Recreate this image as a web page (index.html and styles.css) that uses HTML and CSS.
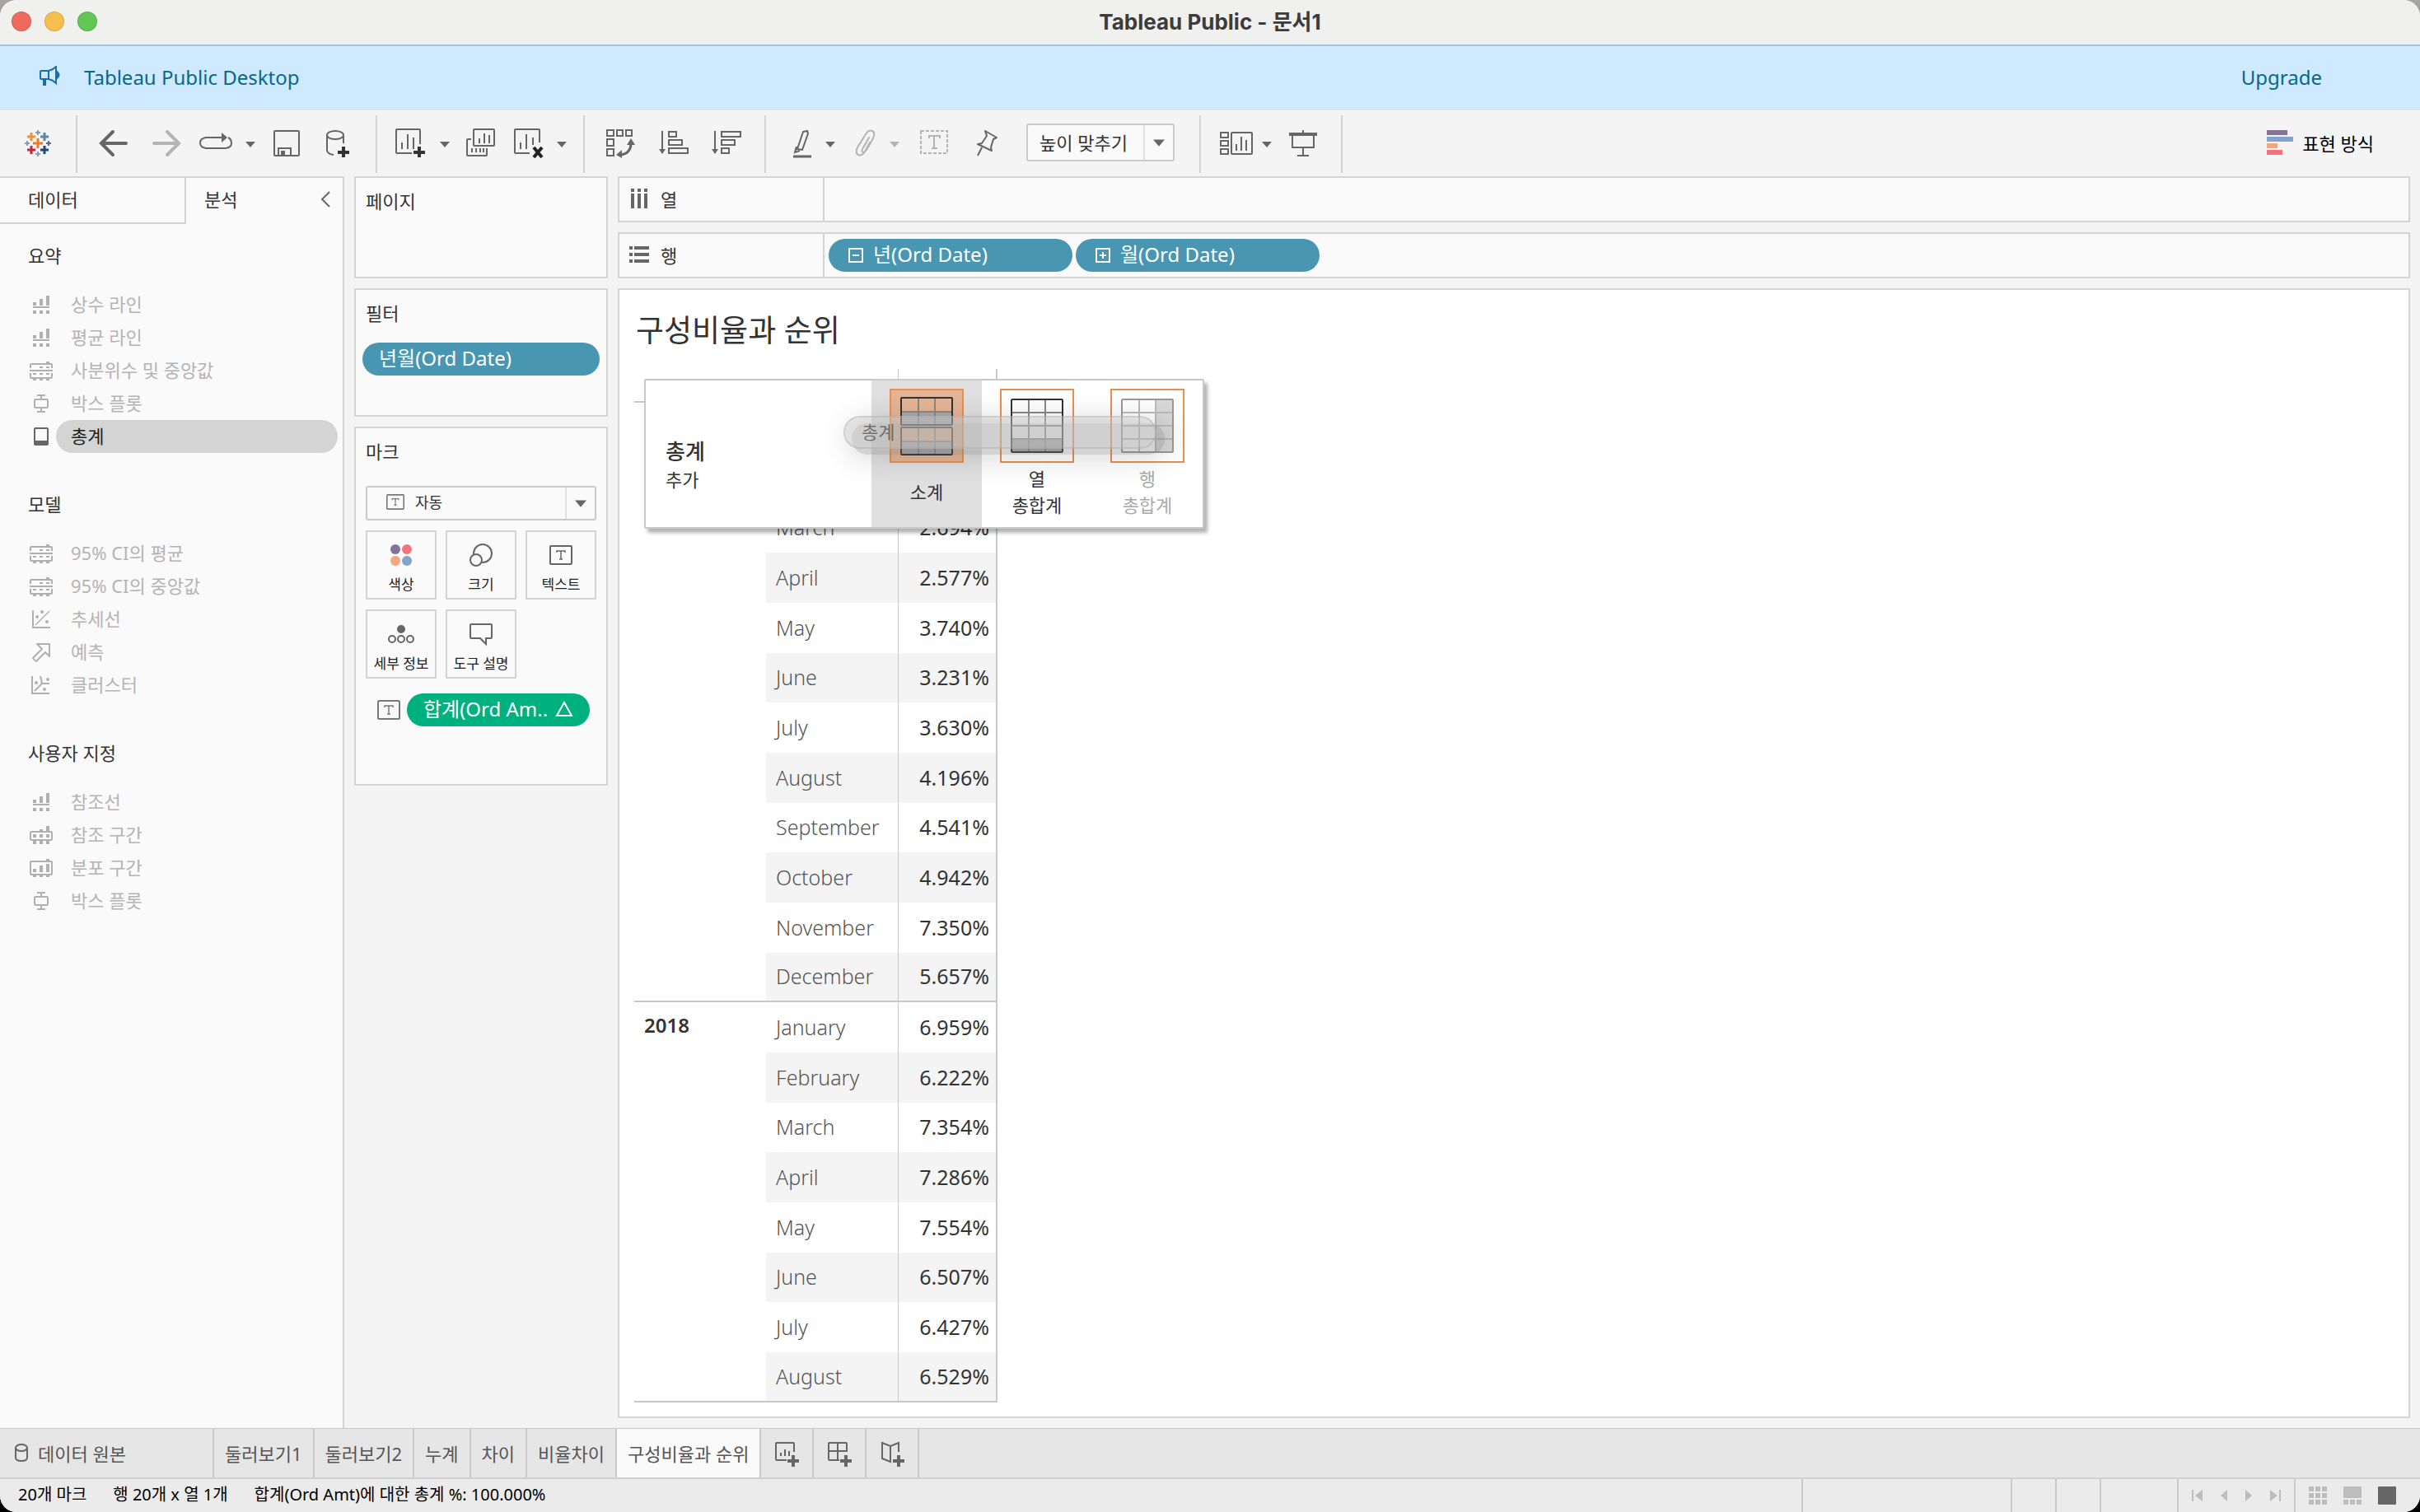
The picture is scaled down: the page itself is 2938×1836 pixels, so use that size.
FILE: index.html
```html
<!DOCTYPE html>
<html lang="ko">
<head>
  <meta charset="UTF-8">
  <meta name="viewport" content="width=device-width, initial-scale=1.0">
  <title>Tableau Public - 문서1</title>
  <link rel="stylesheet" href="styles.css">
</head>
<body>
  <!-- shared icons -->
  <svg class="sprite" aria-hidden="true">
    <symbol id="i-caret" viewBox="0 0 12 8"><path d="M0 1h12L6 8z" fill="currentColor"/></symbol>
    <symbol id="i-line" viewBox="0 0 30 30"><path d="M5 12h4v4H5zM13 8h4v8h-4zM21 4h4v12h-4zM5 17h20v2H5zM5 22h4v4H5zM13 22h4v4h-4zM21 22h4v4h-4z" fill="currentColor"/></symbol>
    <symbol id="i-quartile" viewBox="0 0 30 30"><path d="M2 12V8q0-1 1-1h24q1 0 1 1v4M1 15h28M2 18v5q0 1 1 1h24q1 0 1-1v-5" fill="none" stroke="currentColor" stroke-width="2"/><path d="M21 4h4v2h-4zM13 10h4v2h-4zM21 10h4v2h-4zM5 18h4v2H5zM13 18h4v2h-4zM21 18h4v2h-4zM5 25h4v2H5zM13 25h4v2h-4zM21 25h4v2h-4z" fill="currentColor"/></symbol>
    <symbol id="i-box" viewBox="0 0 30 30"><path d="M10 5h10M15 5v5M10 25h10M15 20v5" fill="none" stroke="currentColor" stroke-width="2"/><rect x="7" y="10" width="16" height="10" rx="1" fill="none" stroke="currentColor" stroke-width="2"/></symbol>
    <symbol id="i-totals" viewBox="0 0 30 30"><rect x="7" y="5" width="16" height="20" rx="1" fill="none" stroke="currentColor" stroke-width="2"/><path d="M7 20h16v5H7z" fill="currentColor"/></symbol>
    <symbol id="i-trend" viewBox="0 0 30 30"><path d="M5 4v21h21" fill="none" stroke="currentColor" stroke-width="2"/><path d="M8 22L25 5" stroke="currentColor" stroke-width="1.5"/><g fill="currentColor"><circle cx="10" cy="12" r="2"/><circle cx="16" cy="6" r="2"/><circle cx="22" cy="18" r="2"/></g></symbol>
    <symbol id="i-forecast" viewBox="0 0 30 30"><path d="M10 5h15v15l-5-5L9 26q-1 0-4-4l11-11z" fill="none" stroke="currentColor" stroke-width="2" stroke-linejoin="round"/></symbol>
    <symbol id="i-cluster" viewBox="0 0 30 30"><path d="M4 4v21h21M14 4l2 9h9M16 13l-9 9" fill="none" stroke="currentColor" stroke-width="2"/><g fill="currentColor"><circle cx="9" cy="12" r="2"/><circle cx="23" cy="8" r="2"/><circle cx="19" cy="20" r="2"/></g></symbol>
    <symbol id="i-band" viewBox="0 0 30 30"><rect x="2" y="11" width="26" height="10" rx="1" fill="none" stroke="currentColor" stroke-width="2"/><path d="M13 8h4v3h-4zM21 4h4v7h-4zM5 14h4v4H5zM13 14h4v4h-4zM21 14h4v4h-4zM5 22h4v4H5zM13 22h4v4h-4zM21 22h4v4h-4z" fill="currentColor"/></symbol>
    <symbol id="i-dist" viewBox="0 0 30 30"><rect x="2" y="7" width="26" height="16" rx="1" fill="none" stroke="currentColor" stroke-width="2"/><path d="M21 4h4v3h-4zM5 16h4v4H5zM13 12h4v8h-4zM21 10h4v10h-4zM5 24h4v2H5zM13 24h4v2h-4zM21 24h4v2h-4z" fill="currentColor"/></symbol>
    <symbol id="i-text" viewBox="0 0 28 24"><rect x="1" y="1" width="26" height="22" rx="1" fill="none" stroke="currentColor" stroke-width="2"/><path d="M9 9V7h10v2M14 7v10M12 17h4" fill="none" stroke="currentColor" stroke-width="1.5"/></symbol>
  </svg>

  <div class="app">
    <header class="titlebar">
      <div class="lights">
        <span class="light red"></span>
        <span class="light yellow"></span>
        <span class="light green"></span>
      </div>
      <h1>Tableau Public - 문서1</h1>
    </header>

    <div class="banner">
      <svg class="megaphone" width="26" height="26" viewBox="0 0 26 26" fill="none" stroke="#1b6fa8" stroke-width="2"><path d="M2 7q0-1 1-1h9q5-1 9-5v20q-4-4-9-5H3q-1 0-1-1zM12 6v10"/><path d="M7 16v8" stroke-width="4"/><path d="M23 8q3 3 0 6z" fill="#1b6fa8"/></svg>
      <a href="#">Tableau Public Desktop</a>
      <a class="upgrade" href="#">Upgrade</a>
    </div>

    <div class="toolbar">
      <div class="group group-logo">
        <button aria-label="시작 페이지">
          <svg width="40" height="40" viewBox="0 0 40 40" fill="none" stroke-width="3"><path d="M20 13v12M14 19h12" stroke="#eb7a31"/><path d="M12 6v10M7 11h10" stroke="#ed9430"/><path d="M28 6v10M23 11h10" stroke="#5889a8"/><path d="M12 22v10M7 27h10" stroke="#c8233e"/><path d="M28 22v10M23 27h10" stroke="#1f447e"/><g stroke-width="2"><path d="M20 3v6M17 6h6M7 16v6M4 19h6" stroke="#7ba3b4"/><path d="M33 16v6M30 19h6" stroke="#5c6692"/><path d="M20 29v6M17 32h6" stroke="#929ab8"/></g></svg>
        </button>
      </div>
      <div class="group group-nav">
        <button aria-label="실행 취소"><svg width="40" height="40" viewBox="0 0 40 40" fill="none" stroke="#666" stroke-width="4" stroke-linecap="round"><path d="M35 19H5M19 5L5 19l14 14"/></svg></button>
        <button aria-label="다시 실행" disabled><svg width="40" height="40" viewBox="0 0 40 40" fill="none" stroke="#b4b4b4" stroke-width="4" stroke-linecap="round"><path d="M7 19h30M23 5l14 14-14 14"/></svg></button>
        <div class="split">
          <button aria-label="바꾸기"><svg width="40" height="40" viewBox="0 0 40 40" fill="none" stroke="#666" stroke-width="2"><path d="M29 12H8q-7 1-7 6.500t7 6.500h24q7-1 7-6 0-5-4-7"/><path d="M27 6l7 6-7 6z" fill="#666" stroke="none"/></svg></button>
          <button aria-label="메뉴" class="caret"><svg width="12" height="8"><use href="#i-caret"/></svg></button>
        </div>
        <button aria-label="저장"><svg width="32" height="40" viewBox="0 0 32 40" fill="none" stroke="#666" stroke-width="2"><rect x="1" y="4" width="30" height="30" rx="1"/><path d="M6 34v-9h15v9"/><path d="M9 28h5v6H9z" fill="#666" stroke="none"/></svg></button>
        <button aria-label="새 데이터 원본"><svg width="40" height="40" viewBox="0 0 40 40" fill="none" stroke="#666" stroke-width="2"><ellipse cx="21" cy="9" rx="10" ry="5"/><path d="M11 9v19q1 4 8 5M31 9v10"/><path d="M31 23v13M24 30h14" stroke="#333" stroke-width="4"/></svg></button>
      </div>
      <div class="group group-sheet">
        <div class="split">
          <button aria-label="새 워크시트"><svg width="38" height="40" viewBox="0 0 38 40" fill="none" stroke="#666" stroke-width="2"><path d="M30 20V3q0-1-1-1H2q-1 0-1 1v27q0 1 1 1h18M8 18v8M15 8v18M22 12v14"/><path d="M29 23v13M22 30h14" stroke="#333" stroke-width="4"/></svg></button>
          <button aria-label="메뉴" class="caret"><svg width="12" height="8"><use href="#i-caret"/></svg></button>
        </div>
        <button aria-label="워크시트 복제"><svg width="36" height="40" viewBox="0 0 36 40" fill="none" stroke="#666" stroke-width="2"><rect x="9" y="2" width="25" height="20" rx="1"/><path d="M16 13v6M22 7v12M28 9v10M6 14H2q-1 0-1 1v18q0 1 1 1h22q1 0 1-1v-8M7 25v5M12 25v5M17 25v5M21 25v5"/></svg></button>
        <div class="split">
          <button aria-label="시트 지우기"><svg width="38" height="40" viewBox="0 0 38 40" fill="none" stroke="#666" stroke-width="2"><path d="M33 18V3q0-1-1-1H4q-1 0-1 1v27q0 1 1 1h17M10 18v8M17 8v18M25 12v9"/><path d="M26 24l10 12M36 24L26 36" stroke="#222" stroke-width="4"/></svg></button>
          <button aria-label="메뉴" class="caret"><svg width="12" height="8"><use href="#i-caret"/></svg></button>
        </div>
      </div>
      <div class="group group-sort">
        <button aria-label="행과 열 바꾸기"><svg width="36" height="40" viewBox="0 0 36 40" fill="none" stroke="#666" stroke-width="2"><rect x="1" y="3" width="8" height="7"/><rect x="13" y="3" width="7" height="7"/><rect x="24" y="3" width="7" height="7"/><rect x="1" y="14" width="8" height="8"/><rect x="1" y="26" width="8" height="8"/><path d="M30 19q0 12-12 14" stroke-width="3"/><path d="M30 13l5 8H25zM12 33l7-6v10z" fill="#666" stroke="none"/></svg></button>
        <button aria-label="오름차순 정렬"><svg width="36" height="40" viewBox="0 0 36 40" fill="none" stroke="#666" stroke-width="2"><path d="M4 4v26"/><path d="M0 26h8l-4 6z" fill="#666" stroke="none"/><rect x="12" y="5" width="9" height="6"/><rect x="12" y="15" width="16" height="6"/><rect x="12" y="25" width="23" height="6"/></svg></button>
        <button aria-label="내림차순 정렬"><svg width="36" height="40" viewBox="0 0 36 40" fill="none" stroke="#666" stroke-width="2"><path d="M4 4v26"/><path d="M0 26h8l-4 6z" fill="#666" stroke="none"/><rect x="12" y="5" width="23" height="6"/><rect x="12" y="15" width="16" height="6"/><rect x="12" y="25" width="9" height="6"/></svg></button>
      </div>
      <div class="group group-format">
        <div class="split">
          <button aria-label="하이라이트"><svg width="24" height="40" viewBox="0 0 24 40" fill="none" stroke="#666" stroke-width="2"><path d="M13 5l5-1 1 3-7 20-6-1zM5 23l-2 7 6-2"/><path d="M1 35h22" stroke-width="3"/></svg></button>
          <button aria-label="메뉴" class="caret"><svg width="12" height="8"><use href="#i-caret"/></svg></button>
        </div>
        <div class="split">
          <button aria-label="그룹 멤버" disabled><svg width="26" height="40" viewBox="0 0 26 40" fill="none" stroke="#b4b4b4" stroke-width="2" stroke-linecap="round"><path d="M17 12L9 26q-1 4 1 4t4-3l8-14q3-7-1-9t-8 4L3 24q-3 7 1 9t8-4l6-11"/></svg></button>
          <button aria-label="메뉴" class="caret" disabled><svg width="12" height="8"><use href="#i-caret"/></svg></button>
        </div>
        <button aria-label="마크 레이블 표시" disabled><svg width="36" height="40" viewBox="0 0 36 40" fill="none" stroke="#b4b4b4" stroke-width="2"><rect x="2" y="4" width="32" height="27" stroke-dasharray="4 2"/><path d="M12 13v-3h13v3M18 10v15M15 25h7"/></svg></button>
        <button aria-label="축 고정"><svg width="36" height="40" viewBox="0 0 36 40" fill="none" stroke="#666" stroke-width="2" stroke-linejoin="round"><path d="M20 4l14 8-4 2-3 10 1 4-17-8 5-1 6-9zM16 24l-5 10"/></svg></button>
        <div class="dropdown fit-dropdown">
          <select aria-label="맞춤"><option>높이 맞추기</option></select>
          <span class="dropdown-arrow"><svg width="14" height="10"><use href="#i-caret"/></svg></span>
        </div>
      </div>
      <div class="group group-show">
        <div class="split tight">
          <button aria-label="카드 표시"><svg width="42" height="40" viewBox="0 0 42 40" fill="none" stroke="#666" stroke-width="2"><rect x="2" y="6" width="9" height="6"/><rect x="2" y="16" width="9" height="6"/><rect x="2" y="26" width="9" height="6"/><rect x="15" y="6" width="25" height="26" rx="1"/><path d="M21 20v8M27 11v17M33 15v13"/></svg></button>
          <button aria-label="메뉴" class="caret"><svg width="12" height="8"><use href="#i-caret"/></svg></button>
        </div>
        <button aria-label="프레젠테이션 모드"><svg width="36" height="40" viewBox="0 0 36 40" fill="none" stroke="#666" stroke-width="2"><path d="M18 3v4M5 9v15h26V9M18 25v9M11 34h14"/><path d="M1 8h34" stroke-width="4"/></svg></button>
      </div>
      <button class="show-me">
        <svg width="32" height="30" viewBox="0 0 32 30"><path d="M0 0h25v6H0z" fill="#86719a"/><path d="M0 8h32v6H0z" fill="#83a4cb"/><path d="M0 16h13v6H0z" fill="#f4a67e"/><path d="M0 24h19v6H0z" fill="#f8717e"/></svg>
        표현 방식
      </button>
    </div>

    <main class="workspace">
      <aside class="sidebar">
        <div class="side-tabs">
          <button class="side-tab">데이터</button>
          <button class="side-tab active">분석</button>
          <button class="collapse" aria-label="접기"><svg width="14" height="20" viewBox="0 0 14 20" fill="none" stroke="#666" stroke-width="2"><path d="M12 1L3 10l9 9"/></svg></button>
        </div>
        <div class="analytics">
          <h2>요약</h2>
          <ul>
            <li><svg class="icon"><use href="#i-line"/></svg><button disabled>상수 라인</button></li>
            <li><svg class="icon"><use href="#i-line"/></svg><button disabled>평균 라인</button></li>
            <li><svg class="icon"><use href="#i-quartile"/></svg><button disabled>사분위수 및 중앙값</button></li>
            <li><svg class="icon"><use href="#i-box"/></svg><button disabled>박스 플롯</button></li>
            <li class="selected"><svg class="icon"><use href="#i-totals"/></svg><button>총계</button></li>
          </ul>
          <h2>모델</h2>
          <ul>
            <li><svg class="icon"><use href="#i-quartile"/></svg><button disabled>95% CI의 평균</button></li>
            <li><svg class="icon"><use href="#i-quartile"/></svg><button disabled>95% CI의 중앙값</button></li>
            <li><svg class="icon"><use href="#i-trend"/></svg><button disabled>추세선</button></li>
            <li><svg class="icon"><use href="#i-forecast"/></svg><button disabled>예측</button></li>
            <li><svg class="icon"><use href="#i-cluster"/></svg><button disabled>클러스터</button></li>
          </ul>
          <h2>사용자 지정</h2>
          <ul>
            <li><svg class="icon"><use href="#i-line"/></svg><button disabled>참조선</button></li>
            <li><svg class="icon"><use href="#i-band"/></svg><button disabled>참조 구간</button></li>
            <li><svg class="icon"><use href="#i-dist"/></svg><button disabled>분포 구간</button></li>
            <li><svg class="icon"><use href="#i-box"/></svg><button disabled>박스 플롯</button></li>
          </ul>
        </div>
      </aside>

      <div class="cards">
        <section class="card pages">
          <h3>페이지</h3>
        </section>
        <section class="card filters">
          <h3>필터</h3>
          <button class="pill blue">년월(Ord Date)</button>
        </section>
        <section class="card marks">
          <h3>마크</h3>
          <div class="dropdown mark-dropdown">
            <svg class="mark-type" width="22" height="19"><use href="#i-text"/></svg>
            <select aria-label="마크 유형"><option>자동</option></select>
            <span class="dropdown-arrow"><svg width="14" height="10"><use href="#i-caret"/></svg></span>
          </div>
          <div class="mark-grid">
            <button><svg width="32" height="32" viewBox="0 0 32 32"><circle cx="9" cy="9" r="6" fill="#86719a"/><circle cx="23" cy="9" r="6" fill="#f8717e"/><circle cx="9" cy="23" r="6" fill="#f4a67e"/><circle cx="23" cy="23" r="6" fill="#83a4cb"/></svg>색상</button>
            <button><svg width="32" height="32" viewBox="0 0 32 32" fill="none" stroke="#666" stroke-width="2"><circle cx="18" cy="14" r="11"/><circle cx="10" cy="22" r="7" fill="#fafafa"/></svg>크기</button>
            <button><svg width="28" height="32" viewBox="0 -4 28 32"><use href="#i-text" width="28" height="24"/></svg>텍스트</button>
            <button><svg width="32" height="32" viewBox="0 0 32 32" fill="none" stroke="#666" stroke-width="2"><circle cx="16" cy="10" r="4" fill="#666"/><circle cx="5" cy="22" r="4"/><circle cx="16" cy="22" r="4"/><circle cx="27" cy="22" r="4"/></svg>세부 정보</button>
            <button><svg width="32" height="32" viewBox="0 0 32 32" fill="none" stroke="#666" stroke-width="2"><path d="M4 4h24q1 0 1 1v15q0 1-1 1h-6v7l-7-7H4q-1 0-1-1V5q0-1 1-1z"/></svg>도구 설명</button>
          </div>
          <div class="mark-pill">
            <svg width="28" height="24"><use href="#i-text"/></svg>
            <button class="pill green">합계(Ord Am.. <svg width="22" height="20" viewBox="0 0 22 20" fill="none" stroke="#fff" stroke-width="2"><path d="M11 2l9 16H2z"/></svg></button>
          </div>
        </section>
      </div>

      <div class="canvas">
        <div class="shelf">
          <div class="shelf-name">
            <svg width="24" height="24" viewBox="0 0 24 24"><path d="M2 0h4v4H2zM10 0h4v4h-4zM18 0h4v4h-4zM2 6h4v18H2zM10 6h4v18h-4zM18 6h4v18h-4z" fill="#666"/></svg>
            열
          </div>
        </div>
        <div class="shelf">
          <div class="shelf-name">
            <svg width="24" height="24" viewBox="0 0 24 24"><path d="M0 2h4v4H0zM0 10h4v4H0zM0 18h4v4H0zM6 2h18v4H6zM6 10h18v4H6zM6 18h18v4H6z" fill="#666"/></svg>
            행
          </div>
          <div class="shelf-pills">
            <button class="pill blue"><svg width="18" height="18" viewBox="0 0 18 18" fill="none" stroke="#fff" stroke-width="2"><path d="M1 1h16v16H1zM5 9h8"/></svg>년(Ord Date)</button>
            <button class="pill blue"><svg width="18" height="18" viewBox="0 0 18 18" fill="none" stroke="#fff" stroke-width="2"><path d="M1 1h16v16H1zM5 9h8M9 5v8"/></svg>월(Ord Date)</button>
          </div>
        </div>

        <section class="view">
          <h2 class="view-title">구성비율과 순위</h2>
          <table class="crosstab">
            <thead>
              <tr><th class="year"></th><th class="month"></th><th class="value"></th></tr>
            </thead>
            <tbody>
              <tr><th class="year" rowspan="12"></th><td class="month"></td><td class="value"></td></tr>
              <tr><td class="month"></td><td class="value"></td></tr>
              <tr><td class="month">March</td><td class="value">2.694%</td></tr>
              <tr><td class="month">April</td><td class="value">2.577%</td></tr>
              <tr><td class="month">May</td><td class="value">3.740%</td></tr>
              <tr><td class="month">June</td><td class="value">3.231%</td></tr>
              <tr><td class="month">July</td><td class="value">3.630%</td></tr>
              <tr><td class="month">August</td><td class="value">4.196%</td></tr>
              <tr><td class="month">September</td><td class="value">4.541%</td></tr>
              <tr><td class="month">October</td><td class="value">4.942%</td></tr>
              <tr><td class="month">November</td><td class="value">7.350%</td></tr>
              <tr class="last"><td class="month">December</td><td class="value">5.657%</td></tr>
              <tr><th class="year" rowspan="8">2018</th><td class="month">January</td><td class="value">6.959%</td></tr>
              <tr><td class="month">February</td><td class="value">6.222%</td></tr>
              <tr><td class="month">March</td><td class="value">7.354%</td></tr>
              <tr><td class="month">April</td><td class="value">7.286%</td></tr>
              <tr><td class="month">May</td><td class="value">7.554%</td></tr>
              <tr><td class="month">June</td><td class="value">6.507%</td></tr>
              <tr><td class="month">July</td><td class="value">6.427%</td></tr>
              <tr class="last"><td class="month">August</td><td class="value">6.529%</td></tr>
            </tbody>
          </table>

          <div class="drop-panel">
            <div class="drop-title">
              <strong>총계</strong>
              <span>추가</span>
            </div>
            <button class="drop-option hover">
              <span class="drop-icon">
                <svg width="64" height="72" viewBox="0 0 64 72" fill="none" stroke-width="2"><path d="M2 19h60v16H2zM2 55h60v15H2z" fill="#aaa"/><path d="M2 19h60M22 2v33M42 2v33M2 55h60M22 38v33M42 38v33" stroke="#888"/><rect x="1" y="2" width="62" height="33" rx="1" stroke="#333"/><rect x="1" y="38" width="62" height="33" rx="1" stroke="#333"/></svg>
              </span>
              <span class="drop-label">소계</span>
            </button>
            <button class="drop-option">
              <span class="drop-icon">
                <svg width="64" height="68" viewBox="0 0 64 68" fill="none" stroke-width="2"><path d="M2 50h60v16H2z" fill="#aaa"/><path d="M2 18h60M2 34h60M2 50h60M22 2v64M42 2v64" stroke="#888"/><rect x="1" y="2" width="62" height="64" rx="1" stroke="#333"/></svg>
              </span>
              <span class="drop-label">열<br>총합계</span>
            </button>
            <button class="drop-option" disabled>
              <span class="drop-icon">
                <svg width="64" height="68" viewBox="0 0 64 68" fill="none" stroke-width="2"><path d="M43 2h19v64H43z" fill="#d8d8d8"/><path d="M2 18h60M2 34h60M2 50h60M22 2v64M42 2v64" stroke="#bbb"/><rect x="1" y="2" width="62" height="64" rx="1" stroke="#999"/></svg>
              </span>
              <span class="drop-label">행<br>총합계</span>
            </button>
            <div class="drag-shadow"></div>
            <div class="drag-ghost">총계</div>
          </div>
        </section>
      </div>
    </main>

    <nav class="sheet-tabs">
      <button class="sheet-tab source"><svg width="18" height="24" viewBox="0 0 18 24" fill="none" stroke="#666" stroke-width="2"><ellipse cx="9" cy="6" rx="7" ry="4"/><path d="M2 6v12q0 4 7 4t7-4V6"/></svg>데이터 원본</button>
      <button class="sheet-tab">둘러보기1</button>
      <button class="sheet-tab">둘러보기2</button>
      <button class="sheet-tab">누계</button>
      <button class="sheet-tab">차이</button>
      <button class="sheet-tab">비율차이</button>
      <button class="sheet-tab active">구성비율과 순위</button>
      <button class="sheet-tab new" aria-label="새 워크시트"><svg width="32" height="32" viewBox="0 0 32 32" fill="none" stroke="#666" stroke-width="2"><path d="M25 14V4q0-1-1-1H4q-1 0-1 1v19q0 1 1 1h12M9 15v4M14 11v8M19 13v6"/><path d="M24 18v14M17 25h14" stroke-width="4"/></svg></button>
      <button class="sheet-tab new" aria-label="새 대시보드"><svg width="32" height="32" viewBox="0 0 32 32" fill="none" stroke="#666" stroke-width="2"><path d="M25 14V4q0-1-1-1H4q-1 0-1 1v19q0 1 1 1h12M3 13h22M14 3v21"/><path d="M24 18v14M17 25h14" stroke-width="4"/></svg></button>
      <button class="sheet-tab new" aria-label="새 스토리"><svg width="32" height="32" viewBox="0 0 32 32" fill="none" stroke="#666" stroke-width="2"><path d="M24 14V3l-10 4L4 3v19l10 4V7"/><path d="M24 18v14M17 25h14" stroke-width="4"/></svg></button>
    </nav>

    <footer class="status">
      <span>20개 마크</span>
      <span>행 20개 x 열 1개</span>
      <span>합계(Ord Amt)에 대한 총계 %: 100.000%</span>
      <div class="status-cells">
        <div class="cell wide"></div>
        <div class="cell"></div>
        <div class="cell"></div>
        <div class="cell mid"></div>
        <div class="cell pager">
          <button aria-label="처음" disabled><svg width="14" height="14" viewBox="0 0 14 14"><path d="M0 0h2v14H0zM13 0v14L4 7z" fill="currentColor"/></svg></button>
          <button aria-label="이전" disabled><svg width="8" height="14" viewBox="0 0 8 14"><path d="M8 0v14L0 7z" fill="currentColor"/></svg></button>
          <button aria-label="다음" disabled><svg width="8" height="14" viewBox="0 0 8 14"><path d="M0 0v14l8-7z" fill="currentColor"/></svg></button>
          <button aria-label="마지막" disabled><svg width="14" height="14" viewBox="0 0 14 14"><path d="M12 0h2v14h-2zM1 0v14l9-7z" fill="currentColor"/></svg></button>
        </div>
        <div class="cell views">
          <button aria-label="시트 정렬기"><svg width="22" height="22" viewBox="0 0 22 22"><path d="M0 0h6v6H0zM8 0h6v6H8zM16 0h6v6h-6zM0 8h6v6H0zM8 8h6v6H8zM16 8h6v6h-6zM0 16h6v6H0zM8 16h6v6H8zM16 16h6v6h-6z" fill="#bdbdbd"/></svg></button>
          <button aria-label="필름 스트립"><svg width="22" height="22" viewBox="0 0 22 22"><path d="M0 0h22v14H0zM0 16h6v6H0zM8 16h6v6H8zM16 16h6v6h-6z" fill="#bdbdbd"/></svg></button>
          <button aria-label="탭"><svg width="22" height="22" viewBox="0 0 22 22"><rect width="22" height="22" rx="1" fill="#666"/></svg></button>
        </div>
      </div>
    </footer>
  </div>
</body>
</html>
```
FILE: styles.css
```css
* {
  box-sizing: border-box;
}

body {
  margin: 0;
  background: linear-gradient(#a9a6a2, #000 20%);
  font-family: "Noto Sans", "Noto Sans CJK KR", sans-serif;
  font-size: 22px;
  color: #333;
}

h1, h2, h3, ul {
  margin: 0;
  padding: 0;
  font-weight: normal;
}

button {
  margin: 0;
  padding: 0;
  border: none;
  background: none;
  font: inherit;
  color: inherit;
  cursor: pointer;
}

button:disabled {
  color: #b4b4b4;
  cursor: default;
}

svg {
  display: block;
  flex-shrink: 0;
}

.sprite {
  position: absolute;
  width: 0;
  height: 0;
}

.app {
  display: flex;
  flex-direction: column;
  min-height: 100vh;
  background-color: #f4f4f4;
  border-radius: 20px;
  overflow: hidden;
}

/* title bar */
.titlebar {
  position: relative;
  display: flex;
  align-items: center;
  justify-content: center;
  height: 54px;
  padding-bottom: 6px;
  background-color: #f0f0ee;
}

.titlebar h1 {
  font-family: Inter, "Noto Sans CJK KR", sans-serif;
  font-size: 26px;
  font-weight: bold;
  color: #3c3c3c;
}

.lights {
  position: absolute;
  left: 14px;
  top: 14px;
  display: flex;
  gap: 16px;
}

.light {
  width: 24px;
  height: 24px;
  border-radius: 50%;
  border: 1px solid rgba(0, 0, 0, 0.12);
}

.red { background-color: #ed6b5f; }
.yellow { background-color: #f5bf4f; }
.green { background-color: #62c655; }

.banner {
  display: flex;
  align-items: center;
  height: 80px;
  padding: 0 119px 4px 47px;
  border-top: 2px solid #a7c6e0;
  background-color: #cfe9fe;
  font-size: 24px;
}

.banner a {
  margin-left: 29px;
  color: #04688f;
  text-decoration: none;
}

.banner .upgrade {
  margin-left: auto;
}

/* toolbar */
.toolbar {
  display: flex;
  align-items: center;
  height: 80px;
  padding-top: 2px;
}

.group {
  display: flex;
  align-items: center;
  height: 70px;
  border-right: 2px solid #d4d4d4;
}

.group-logo { padding: 0 26px; }
.group-nav { gap: 22px; padding: 0 30px 0 24px; }
.group-sheet { gap: 20px; padding: 0 20px 0 22px; }
.group-sort { gap: 28px; padding: 0 28px 0 26px; }
.group-format { gap: 24px; padding: 0 30px 0 32px; }
.group-show { gap: 20px; padding: 0 28px 0 22px; }

.split {
  display: flex;
  align-items: center;
  gap: 16px;
}

.split.tight {
  gap: 10px;
}

.caret {
  color: #666;
}

.dropdown {
  position: relative;
}

.dropdown select {
  display: block;
  width: 100%;
  height: 100%;
  border: 2px solid #cacaca;
  border-radius: 3px;
  background-color: #fafafa;
  color: #333;
  font: inherit;
  appearance: none;
}

.dropdown-arrow {
  position: absolute;
  top: 2px;
  right: 2px;
  bottom: 2px;
  display: flex;
  align-items: center;
  justify-content: center;
  width: 36px;
  border-left: 2px solid #e0e0e0;
  color: #666;
  pointer-events: none;
}

.fit-dropdown {
  width: 180px;
  height: 46px;
  margin: 0 0 4px 10px;
}

.fit-dropdown select {
  padding: 0 40px 0 14px;
}

.show-me {
  display: flex;
  align-items: center;
  gap: 11px;
  margin-left: auto;
  padding: 0 56px 4px 0;
  color: #000;
}

/* left pane */
.workspace {
  display: flex;
  flex: 1;
}

.sidebar {
  width: 418px;
  border: 2px solid #d4d4d4;
  border-width: 2px 2px 0 0;
  background-color: #fafafa;
}

.side-tabs {
  display: flex;
  height: 56px;
}

.side-tab {
  width: 226px;
  padding: 0 34px 4px;
  border: 2px solid #d4d4d4;
  border-width: 0 2px 2px 0;
  text-align: left;
}

.side-tab.active {
  flex: 1;
  padding: 0 22px 6px;
  border: none;
}

.collapse {
  padding: 0 14px 4px 0;
}

.analytics {
  padding-top: 18px;
}

.analytics h2 {
  padding-left: 34px;
  font-size: 22px;
  line-height: 40px;
}

.analytics ul {
  margin: 20px 0 42px;
  list-style: none;
}

.analytics li {
  display: flex;
  align-items: center;
  gap: 3px;
  padding: 0 6px 0 35px;
  color: #b0b0b0;
}

.analytics li button {
  flex: 1;
  height: 40px;
  padding: 0 18px 4px;
  border-radius: 20px;
  text-align: left;
}

.analytics .selected {
  color: #666;
}

.analytics .selected button {
  background-color: #d4d4d4;
  color: #222;
}

.icon {
  width: 30px;
  height: 30px;
}

/* cards */
.cards {
  display: flex;
  flex-direction: column;
  gap: 12px;
  width: 308px;
  margin: 0 12px;
}

.card {
  padding: 12px;
  border: 2px solid #d4d4d4;
  background-color: #fafafa;
}

.card h3 {
  font-size: 22px;
  line-height: 32px;
}

.pages { height: 124px; }
.filters { height: 156px; }
.marks { height: 436px; }

.pill {
  display: flex;
  align-items: center;
  gap: 12px;
  height: 40px;
  padding: 0 20px 2px;
  border-radius: 20px;
  font-size: 24px;
  line-height: 36px;
  color: #fff;
  white-space: nowrap;
}

.blue { background-color: #4996b2; }
.green.pill { background-color: #00b180; }

.filters .pill {
  width: 288px;
  margin: 20px -4px 0;
}

.mark-dropdown {
  height: 42px;
  margin: 26px 0 12px;
  font-size: 18px;
}

.mark-dropdown select {
  padding: 0 40px 2px 58px;
}

.mark-type {
  position: absolute;
  left: 25px;
  top: 10px;
  color: #777;
}

.mark-grid {
  display: grid;
  grid-template-columns: repeat(3, 86px);
  gap: 12px 11px;
}

.mark-grid button {
  display: flex;
  flex-direction: column;
  align-items: center;
  height: 84px;
  padding-top: 12px;
  border: 2px solid #d4d4d4;
  font-size: 17px;
  line-height: 20px;
  color: #222;
}

.mark-grid svg {
  margin-bottom: 10px;
  color: #666;
}

.mark-pill {
  display: flex;
  align-items: center;
  gap: 8px;
  padding: 18px 8px 0 14px;
  color: #777;
}

.mark-pill .pill {
  flex: 1;
  gap: 4px;
  justify-content: space-between;
}

/* shelves */
.canvas {
  display: flex;
  flex: 1;
  flex-direction: column;
  gap: 12px;
  margin: 0 12px 12px 0;
}

.shelf {
  display: flex;
  height: 56px;
  border: 2px solid #d4d4d4;
  background-color: #fafafa;
}

.shelf-name {
  display: flex;
  align-items: center;
  gap: 14px;
  width: 249px;
  padding: 0 12px 2px;
  border-right: 2px solid #d4d4d4;
}

.shelf-pills {
  display: flex;
  align-items: center;
  gap: 4px;
  padding-left: 5px;
}

.shelf-pills .pill {
  width: 296px;
  padding-left: 24px;
}

.shelf-pills svg {
  margin-top: 2px;
}

/* view */
.view {
  position: relative;
  flex: 1;
  padding: 20px 18px 16px;
  border: 2px solid #d4d4d4;
  background-color: #fff;
}

.view-title {
  padding-left: 2px;
  font-size: 37px;
  line-height: 58px;
}

.crosstab {
  width: 441px;
  margin-top: 18px;
  border-spacing: 0;
  table-layout: fixed;
  font-size: 25px;
  line-height: 32px;
}

.crosstab th,
.crosstab td {
  padding: 0 0 2px;
}

.crosstab thead tr {
  height: 41px;
}

.crosstab tbody tr {
  height: 61px;
}

.crosstab tbody tr:nth-child(3n) {
  height: 60px;
}

.crosstab .year {
  width: 160px;
  padding: 12px;
  border-bottom: 2px solid #c8c8c8;
  font-size: 24px;
  font-weight: 600;
  text-align: left;
  vertical-align: top;
}

.crosstab thead th {
  padding: 0;
  border-bottom: 2px solid #c8c8c8;
}

.crosstab .month {
  width: 160px;
  padding-left: 12px;
  font-weight: 300;
  color: #555;
}

.crosstab .value {
  padding-right: 8px;
  border-left: 1px solid #c8c8c8;
  border-right: 2px solid #c8c8c8;
  text-align: right;
}

.crosstab thead .value {
  border-bottom: none;
}

.crosstab tbody tr:nth-child(even) td {
  background-color: #f4f4f4;
}

.crosstab .last td {
  border-bottom: 2px solid #c8c8c8;
}

/* drop target shown while dragging totals */
.drop-panel {
  position: absolute;
  left: 30px;
  top: 108px;
  display: flex;
  width: 680px;
  height: 182px;
  border: 2px solid #c8c8c8;
  border-radius: 2px;
  background-color: #fff;
  box-shadow: 4px 5px 4px rgba(0, 0, 0, 0.3);
}

.drop-title {
  display: flex;
  flex: 1;
  flex-direction: column;
  padding: 69px 0 0 24px;
  line-height: 34px;
}

.drop-title strong {
  font-size: 26px;
  font-weight: 500;
}

.drop-option {
  display: flex;
  flex-direction: column;
  align-items: center;
  width: 134px;
  padding-top: 10px;
  line-height: 32px;
}

.drop-option:disabled {
  color: #aaa;
}

.hover {
  background-color: #e0e0e0;
}

.drop-icon {
  display: flex;
  align-items: center;
  justify-content: center;
  width: 90px;
  height: 90px;
  border: 2px solid #ea8f50;
}

.hover .drop-icon {
  background-color: #e6b596;
}

.drop-label {
  display: flex;
  align-items: center;
  height: 64px;
  margin-top: 3px;
}

.drag-ghost,
.drag-shadow {
  position: absolute;
  left: 240px;
  top: 43px;
  width: 380px;
  height: 40px;
  border-radius: 20px;
}

.drag-ghost {
  padding-left: 20px;
  border: 2px solid rgba(160, 160, 160, 0.3);
  background-color: rgba(205, 205, 205, 0.45);
  line-height: 34px;
  color: rgba(60, 60, 60, 0.65);
}

.drag-shadow {
  left: 250px;
  top: 52px;
  height: 38px;
  background-color: rgba(110, 110, 110, 0.3);
  box-shadow: 0 0 36px 6px rgba(0, 0, 0, 0.14);
}

/* bottom */
.sheet-tabs {
  display: flex;
  height: 60px;
  border-top: 1px solid #c8c8c8;
  background-color: #e6e6e6;
}

.sheet-tab {
  padding: 0 13px 2px;
  border-right: 2px solid #cacaca;
  color: #555;
}

.sheet-tab.source {
  display: flex;
  align-items: center;
  gap: 11px;
  width: 260px;
  padding: 0 17px 2px;
}

.sheet-tab.active {
  background-color: #fafafa;
}

.sheet-tab.new {
  width: 64px;
  padding: 0 15px;
}

.status {
  display: flex;
  align-items: center;
  gap: 32px;
  height: 42px;
  padding-left: 22px;
  border-top: 2px solid #d0d0d0;
  background-color: #ebebeb;
  font-size: 20px;
  line-height: 36px;
  color: #000;
}

.status span {
  padding-bottom: 2px;
}

.status-cells {
  display: flex;
  align-self: stretch;
  margin-left: auto;
}

.cell {
  display: flex;
  align-items: center;
  width: 54px;
  border-left: 2px solid #cacaca;
}

.cell.wide { width: 254px; }
.cell.mid { width: 94px; }

.pager {
  justify-content: space-between;
  width: 142px;
  padding: 0 16px;
}

.pager button {
  color: #bdbdbd;
}

.views {
  gap: 20px;
  width: 153px;
  padding-left: 16px;
}
```
